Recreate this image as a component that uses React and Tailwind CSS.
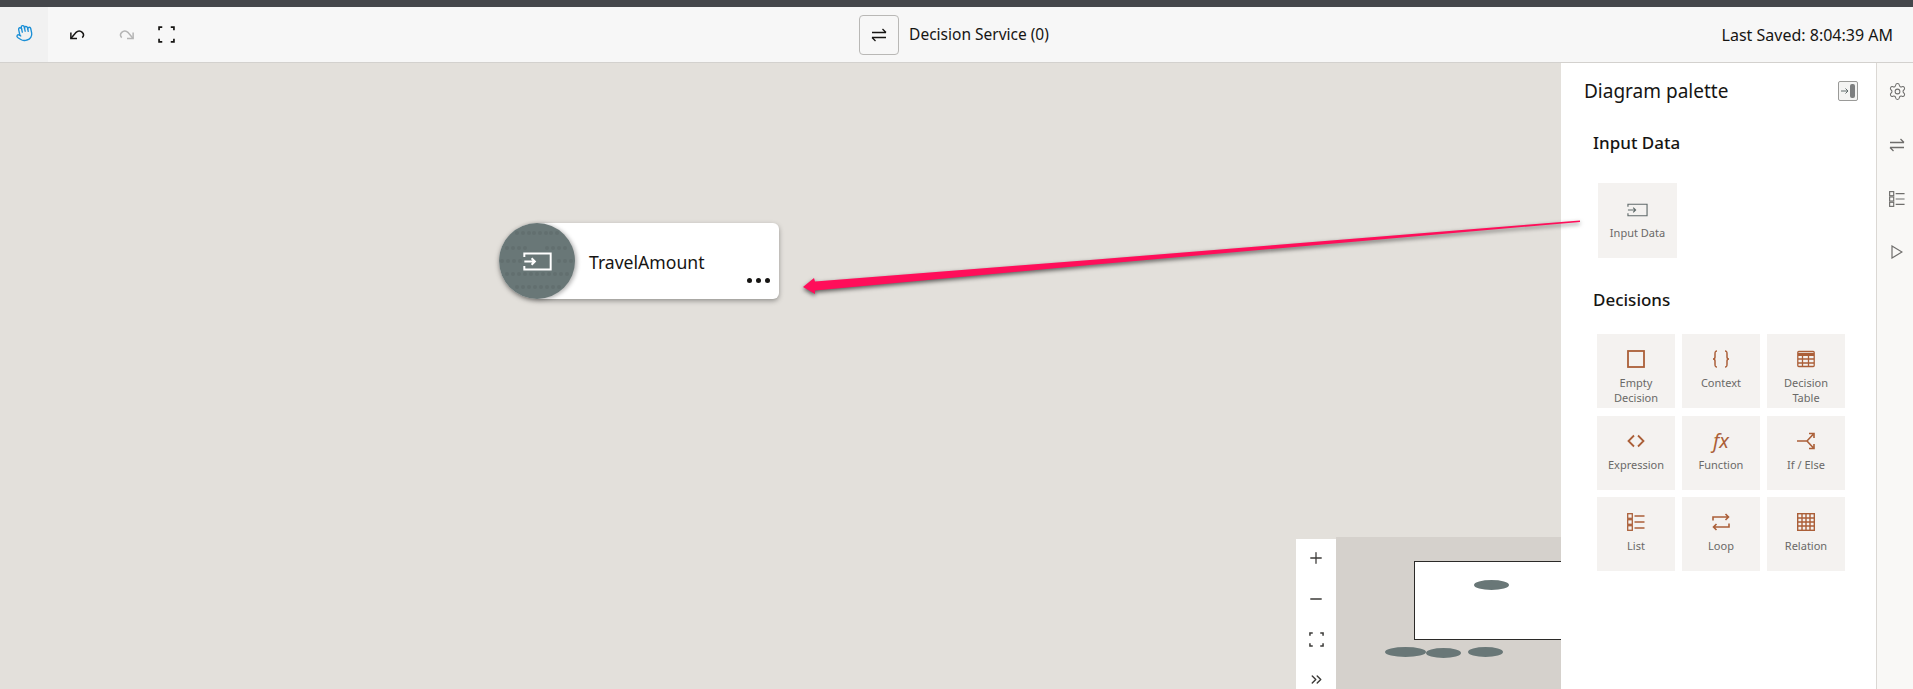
import React from "react";
import { Hand, Settings, Plus, Minus, ChevronsRight } from "lucide-react";

const SwapIcon = ({ className }) => (
  <svg viewBox="0 0 16 16" fill="none" stroke="currentColor" strokeWidth="1.3" className={className}>
    <path d="M1 5.5h14M11.500 2L15 5.500" />
    <path d="M15 10.500H1M4.500 14L1 10.500" />
  </svg>
);

const FrameIcon = ({ className }) => (
  <svg viewBox="0 0 16 16" fill="none" stroke="currentColor" strokeWidth="1.600" className={className}>
    <path d="M1 4V1h3M12 1h3v3M15 12v3h-3M4 15H1v-3" />
  </svg>
);

const InputIcon = ({ className, strokeWidth = 1.2 }) => (
  <svg viewBox="0 0 22 14" fill="none" stroke="currentColor" strokeWidth={strokeWidth} className={className}>
    <path d="M1 3.500V1h20v12H1v-2.500" />
    <path d="M1 7h8M6.500 4.500L9 7l-2.500 2.500" />
  </svg>
);

const ListIcon = ({ className }) => (
  <svg viewBox="0 0 18 18" fill="none" stroke="currentColor" strokeWidth="1.300" className={className}>
    <rect x="0.700" y="0.700" width="4.600" height="4.600" />
    <rect x="0.700" y="6.700" width="4.600" height="4.600" />
    <rect x="0.700" y="12.700" width="4.600" height="4.600" />
    <path d="M7.500 3h10M7.500 9h10M7.500 15h10" />
  </svg>
);

const brown = "w-[18px] h-[18px] text-[#ab5f38]";

const tiles = [
  {
    label: ["Empty", "Decision"],
    icon: (
      <svg viewBox="0 0 18 18" fill="none" stroke="currentColor" strokeWidth="1.800" className={brown}>
        <rect x="1" y="1" width="16" height="16" />
      </svg>
    ),
  },
  {
    label: ["Context"],
    icon: (
      <svg viewBox="0 0 18 18" fill="none" stroke="currentColor" strokeWidth="1.500" className={brown}>
        <path d="M5 1C3 1 3 2 3 4v3c0 1-.5 2-2 2 1.500 0 2 1 2 2v3c0 2 0 3 2 3" />
        <path d="M13 1c2 0 2 1 2 3v3c0 1 .5 2 2 2-1.500 0-2 1-2 2v3c0 2 0 3-2 3" />
      </svg>
    ),
  },
  {
    label: ["Decision", "Table"],
    icon: (
      <svg viewBox="0 0 18 18" fill="none" stroke="currentColor" strokeWidth="1.300" className={brown}>
        <rect x="0.800" y="1.500" width="16.400" height="15" rx="1" />
        <path d="M1 4.500h16" strokeWidth="3" />
        <path d="M1 9h16M1 13h16M5.500 5v11M11.500 5v11" />
      </svg>
    ),
  },
  {
    label: ["Expression"],
    icon: (
      <svg viewBox="0 0 18 18" fill="none" stroke="currentColor" strokeWidth="1.800" className={brown}>
        <path d="M7 3.500L1.500 9 7 14.500M11 3.500L16.500 9 11 14.500" />
      </svg>
    ),
  },
  {
    label: ["Function"],
    icon: <span className="h-[20px] text-[20px] leading-[20px] italic text-[#ab5f38]">fx</span>,
  },
  {
    label: ["If / Else"],
    icon: (
      <svg viewBox="0 0 18 18" fill="none" stroke="currentColor" strokeWidth="1.600" className={brown}>
        <path d="M0 9h10l6-6.500M10 9l6 6.500M12 1.500h5v4.500M12 16.500h5V12" />
      </svg>
    ),
  },
  { label: ["List"], icon: <ListIcon className={brown} /> },
  {
    label: ["Loop"],
    icon: (
      <svg viewBox="0 0 18 18" fill="none" stroke="currentColor" strokeWidth="1.600" className={brown}>
        <path d="M1 7.500V4h15.500M13.500 1l3 3-3 3" />
        <path d="M17 10.500V14H1.500M4.500 11l-3 3 3 3" />
      </svg>
    ),
  },
  {
    label: ["Relation"],
    icon: (
      <svg viewBox="0 0 18 18" fill="none" stroke="currentColor" strokeWidth="1.400" className={brown}>
        <rect x="0.700" y="0.700" width="16.600" height="16.600" />
        <path d="M1 5h16M1 9h16M1 13h16M5 1v16M9 1v16M13 1v16" />
      </svg>
    ),
  },
];

const Tile = ({ label, icon, size, pad = "pt-[15px]" }) => (
  <div className={`${size} ${pad} flex flex-col items-center bg-[#f4f2f0]`}>
    <div className="h-[20px] flex items-center justify-center">{icon}</div>
    <div className="mt-[6px] text-[11px] leading-[15px] text-center text-[#6a6967]">
      {label.map((line) => (
        <div key={line}>{line}</div>
      ))}
    </div>
  </div>
);

// dotted texture on the node's round badge
const dotRows = [
  { y: 10, xs: [18, 24, 30, 35, 41, 47, 52, 58] },
  { y: 25, xs: [8, 14, 20, 26, 48, 54, 60, 66] },
  { y: 38, xs: [3, 9, 15, 21, 60, 66, 72] },
  { y: 51, xs: [8, 14, 20, 26, 32, 38, 44, 50, 56, 62, 68] },
  { y: 64, xs: [18, 24, 30, 36, 42, 48, 54, 60] },
];

export default function App() {
  return (
    <div className="h-screen w-full overflow-hidden flex flex-col bg-[#e3e0db] font-['Noto_Sans',sans-serif] text-[#161513]">
      <div className="h-[7px] bg-[#45474b] shrink-0" />

      <header className="h-[56px] shrink-0 grid grid-cols-3 items-center bg-[#f7f7f7] border-b border-[#d3d1ce]">
        <div className="flex items-center h-full">
          <div className="w-[48px] h-full flex items-center justify-center bg-[#f1f1f1]">
            <Hand className="w-[18px] h-[18px] -mt-[4px] text-[#1b8fd6] rotate-[-12deg]" strokeWidth={1.800} />
          </div>
          <svg viewBox="0 0 18 16" fill="none" stroke="currentColor" strokeWidth="1.700" className="ml-[21px] w-[16px] h-[14px] mt-[1px]">
            <path d="M2 5v7h7" />
            <path d="M2 12l6-7c2-2 5-2 7 0s2 4 0 6" />
          </svg>
          <svg viewBox="0 0 18 16" fill="none" stroke="currentColor" strokeWidth="1.700" className="ml-[34px] w-[16px] h-[14px] mt-[1px] text-[#b5b5b5]">
            <path d="M16 5v7H9" />
            <path d="M16 12l-6-7C8 3 5 3 3 5s-2 4 0 6" />
          </svg>
          <FrameIcon className="ml-[23px] w-[17px] h-[17px]" />
        </div>

        <div className="flex items-center justify-center gap-[10px] pr-[5px]">
          <button className="w-[40px] h-[40px] flex items-center justify-center rounded-[4px] border border-[#b9b8b6] bg-[#f7f7f7]">
            <SwapIcon className="w-[16px] h-[16px]" />
          </button>
          <span className="text-[15.500px]">Decision Service (0)</span>
        </div>

        <div className="text-right pr-[20px] text-[16px]">Last Saved: 8:04:39 AM</div>
      </header>

      <div className="flex-1 min-h-0 flex">
        <main className="relative flex-1 min-w-0 overflow-hidden">
          {/* node on the diagram canvas */}
          <div className="absolute left-[499px] top-[160px] w-[280px] h-[76px] flex items-center bg-white rounded-l-[38px] rounded-r-[6px] shadow-[0_2px_5px_rgba(0,0,0,0.35)]">
            <div className="relative w-[76px] h-[76px] shrink-0 flex items-center justify-center rounded-full bg-[#697777] shadow-[2px_1px_4px_rgba(0,0,0,0.3)]">
              <svg viewBox="0 0 76 76" className="absolute inset-0 w-full h-full text-[#626f6f]" fill="currentColor">
                {dotRows.map((row) =>
                  row.xs.map((x) => <circle key={`${row.y}-${x}`} cx={x} cy={row.y} r="2" />)
                )}
              </svg>
              <InputIcon className="relative w-[29px] h-[19px] mt-[1px] text-white" strokeWidth={1.500} />
            </div>
            <span className="ml-[14px] mt-[3px] text-[17.600px] text-[#161513]">TravelAmount</span>
            <div className="absolute right-[9px] bottom-[16px] flex gap-[4px]">
              <span className="w-[5px] h-[5px] rounded-full bg-[#161513]" />
              <span className="w-[5px] h-[5px] rounded-full bg-[#161513]" />
              <span className="w-[5px] h-[5px] rounded-full bg-[#161513]" />
            </div>
          </div>

          {/* minimap */}
          <div className="absolute right-0 bottom-0 w-[265px] h-[152px] flex">
            <div className="w-[40px] mt-[2px] flex flex-col items-center bg-white text-[#3c3b39]">
              <Plus className="w-[18px] h-[18px] mt-[10px]" strokeWidth={1.700} />
              <Minus className="w-[18px] h-[18px] mt-[23px]" strokeWidth={1.700} />
              <FrameIcon className="w-[15px] h-[15px] mt-[24px]" />
              <ChevronsRight className="w-[17px] h-[17px] mt-[24px]" strokeWidth={2} />
            </div>
            <div className="relative flex-1 bg-[#d5d1cc]">
              <div className="absolute left-[78px] top-[24px] right-0 h-[79px] bg-white border border-r-0 border-[#2b2a28]" />
              <div className="absolute left-[138px] top-[43px] w-[35px] h-[10px] rounded-[50%] bg-[#697777]" />
              <div className="absolute left-[49px] top-[110px] w-[41px] h-[10px] rounded-[50%] bg-[#697777]" />
              <div className="absolute left-[90px] top-[111px] w-[35px] h-[10px] rounded-[50%] bg-[#697777]" />
              <div className="absolute left-[132px] top-[110px] w-[35px] h-[10px] rounded-[50%] bg-[#697777]" />
            </div>
          </div>
        </main>

        <aside className="w-[315px] shrink-0 bg-white pt-[14px]">
          <div className="flex items-center justify-between pl-[23px] pr-[18px]">
            <h2 className="text-[19px] leading-[28px]">Diagram palette</h2>
            <div className="w-[20px] h-[20px] flex items-center gap-[1px] pl-[2px] rounded-[2px] border border-[#9a9a98] bg-[#f4f4f3] text-[#5f6a6a]">
              <svg viewBox="0 0 8 8" fill="none" stroke="currentColor" strokeWidth="1" className="w-[8px] h-[8px]">
                <path d="M0 4h7M4.500 1.500L7 4 4.500 6.500" />
              </svg>
              <span className="w-[5px] h-[14px] rounded-[2px] bg-[#7d7f80]" />
            </div>
          </div>

          <h3 className="mt-[26px] pl-[32px] text-[17px] leading-[24px] font-medium">Input Data</h3>
          <div className="mt-[28px] pl-[37px]">
            <Tile
              size="w-[79px] h-[75px]"
              pad="pt-[16px]"
              label={["Input Data"]}
              icon={<InputIcon className="w-[21px] h-[14px] mt-[2px] text-[#5f6a6a]" />}
            />
          </div>

          <h3 className="mt-[30px] pl-[32px] text-[17px] leading-[24px] font-medium">Decisions</h3>
          <div className="mt-[22px] pl-[36px] grid grid-cols-[78px_78px_78px] gap-x-[7px] gap-y-[7.500px]">
            {tiles.map((t) => (
              <Tile key={t.label.join(" ")} size="h-[74px]" label={t.label} icon={t.icon} />
            ))}
          </div>
        </aside>

        <nav className="w-[37px] shrink-0 flex flex-col items-center pl-[4px] bg-[#f9f8f6] border-l border-[#dbd8d4] text-[#6f6e6c]">
          <Settings className="w-[19px] h-[19px] mt-[19px]" strokeWidth={1.300} />
          <SwapIcon className="w-[16px] h-[16px] mt-[36px]" />
          <ListIcon className="w-[16px] h-[16px] mt-[38px]" />
          <svg viewBox="0 0 12 14" fill="none" stroke="currentColor" strokeWidth="1.200" className="w-[12px] h-[14px] mt-[38px]">
            <path d="M1 1l10 6-10 6z" />
          </svg>
        </nav>
      </div>

      {/* annotation arrow drawn over the screenshot */}
      <svg
        className="absolute inset-0 w-[1913px] h-[689px] pointer-events-none drop-shadow-[0_2px_2px_rgba(0,0,0,0.6)]"
        viewBox="0 0 1913 689"
      >
        <polygon
          points="803,287 814,278 815,281.500 1090,260 1300,243 1580,220.500 1580,222 1300,246.500 1090,265 815,290.500 815,294"
          fill="#ff0e5a"
        />
      </svg>
    </div>
  );
}
